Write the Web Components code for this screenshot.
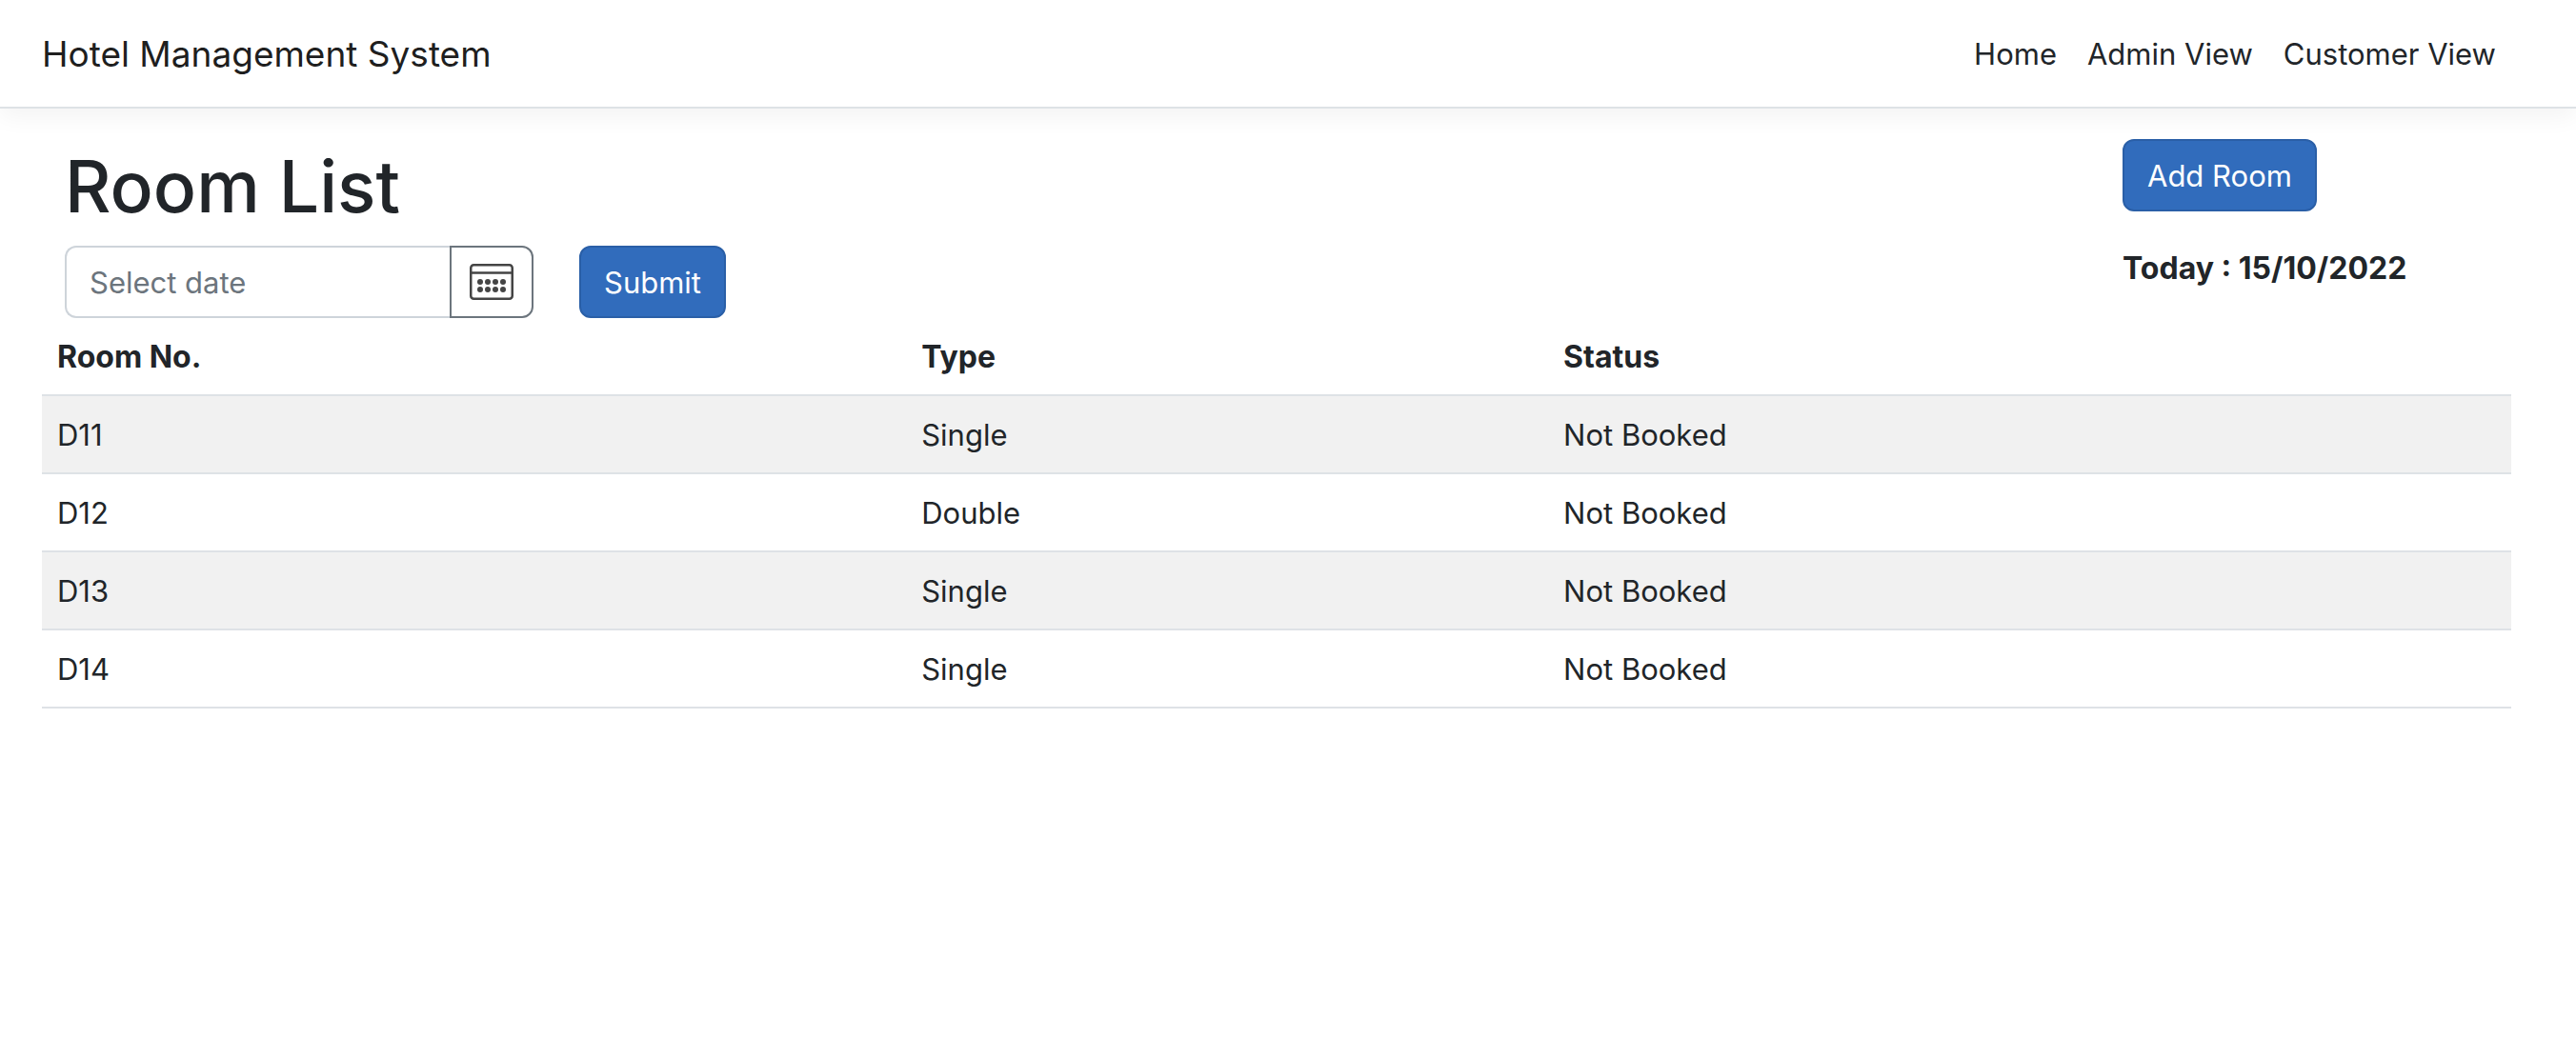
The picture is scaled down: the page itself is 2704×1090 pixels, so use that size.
<!DOCTYPE html>
<html lang="en">
<head>
<meta charset="utf-8">
<title>Hotel Management System</title>
<style>
  body {
    margin: 0;
    background: #fff;
    color: #212529;
    font: 400 31px/48px Inter, "Liberation Sans", sans-serif;
    --line: #dee2e6;
    --primary: #316cbc;
    --primary-edge: #2a5fa7;
  }
</style>
</head>
<body>
<hotel-app></hotel-app>
<script>
const define = (name, html, setup) => customElements.define(name, class extends HTMLElement {
  constructor() {
    super();
    const t = document.createElement('template');
    t.innerHTML = html;
    this.attachShadow({ mode: 'open' }).append(t.content.cloneNode(true));
  }
  connectedCallback() { if (setup) setup(this); }
});

define('site-header', `
<style>
  :host { display: block; }
  header { display: flex; align-items: center; justify-content: space-between; padding: 33px 84px 31px 44px;
    border-bottom: 2px solid var(--line); box-shadow: 0 8px 24px rgba(0,0,0,.05); background: #fff; }
  .brand { color: rgba(0,0,0,.9); font-size: 37px; text-decoration: none; }
  nav { display: flex; gap: 32px; }
  ::slotted(a) { color: #212529; text-decoration: none; }
</style>
<header><a class="brand" href="#"><slot name="brand"></slot></a><nav><slot></slot></nav></header>`);

define('primary-button', `
<style>
  :host { display: inline-flex; }
  button { font: inherit; color: #fff; background: var(--primary); border: 2px solid var(--primary-edge);
    border-radius: 12px; padding: 13px 24px 11px; cursor: pointer; }
</style>
<button type="button"><slot></slot></button>`);

define('date-field', `
<style>
  :host { display: flex; width: 492px; }
  input, button { box-sizing: border-box; font: inherit; background: #fff; margin: 0; }
  input { flex: 1; min-width: 0; color: #212529; border: 2px solid #ced4da; border-right: 0;
    border-radius: 12px 0 0 12px; padding: 13px 24px 11px; }
  input::placeholder { color: #6c757d; opacity: 1; }
  button { display: flex; align-items: center; justify-content: center; width: 88px; padding: 0;
    border: 2px solid #6c757d; border-radius: 0 12px 12px 0; cursor: pointer; }
  svg { display: block; }
</style>
<input type="text" placeholder="Select date" aria-label="Select date">
<button type="button" aria-label="Open calendar">
  <svg width="46" height="38" viewBox="0 0 46 38" fill="none" stroke="#444" stroke-width="2.5">
    <rect x="1.25" y="1.25" width="43.5" height="35.5" rx="3"/>
    <path d="M1 9.5h44"/>
    <g fill="#444" stroke="none">
      <circle cx="11" cy="19" r="3"/><circle cx="19" cy="19" r="3"/><circle cx="27" cy="19" r="3"/><circle cx="35" cy="19" r="3"/>
      <circle cx="11" cy="27" r="3"/><circle cx="19" cy="27" r="3"/><circle cx="27" cy="27" r="3"/><circle cx="35" cy="27" r="3"/>
    </g>
  </svg>
</button>`);

define('room-table', `
<style>
  :host { display: block; }
  table { width: 100%; border-collapse: separate; border-spacing: 0; table-layout: fixed; }
  th, td { box-sizing: border-box; padding: 17px 16px 15px; text-align: left; border-bottom: 2px solid var(--line); }
  th { font-size: 32px; font-weight: 700; }
  th:nth-child(1) { width: 35%; }
  th:nth-child(2) { width: 26%; }
  tbody tr:nth-child(odd) { background: #f1f1f1; }
</style>
<table>
  <thead><tr><th scope="col">Room No.</th><th scope="col">Type</th><th scope="col">Status</th></tr></thead>
  <tbody></tbody>
</table>`, el => {
  const body = el.shadowRoot.querySelector('tbody');
  body.replaceChildren();
  for (const room of [['D11', 'Single'], ['D12', 'Double'], ['D13', 'Single'], ['D14', 'Single']]) {
    const tr = body.insertRow();
    for (const v of [...room, 'Not Booked']) tr.insertCell().textContent = v;
  }
});

define('hotel-app', `
<style>
  :host { display: block; }
  main { padding: 32px 68px 32px 44px; }
  .top { display: flex; justify-content: space-between; padding: 0 24px; }
  h1 { margin: 0 0 12px; font-size: 75px; line-height: 100px; font-weight: 500; }
  form { display: flex; gap: 48px; }
  aside { display: flex; flex-direction: column; align-items: flex-start; gap: 36px; width: 384px; }
  strong { font-size: 32px; font-weight: 700; white-space: nowrap; }
</style>
<site-header>
  <span slot="brand">Hotel Management System</span>
  <a href="#home">Home</a><a href="#admin">Admin View</a><a href="#customer">Customer View</a>
</site-header>
<main>
  <div class="top">
    <section>
      <h1>Room List</h1>
      <form><date-field></date-field><primary-button>Submit</primary-button></form>
    </section>
    <aside><primary-button>Add Room</primary-button><strong>Today : 15/10/2022</strong></aside>
  </div>
  <room-table></room-table>
</main>`);
</script>
</body>
</html>
